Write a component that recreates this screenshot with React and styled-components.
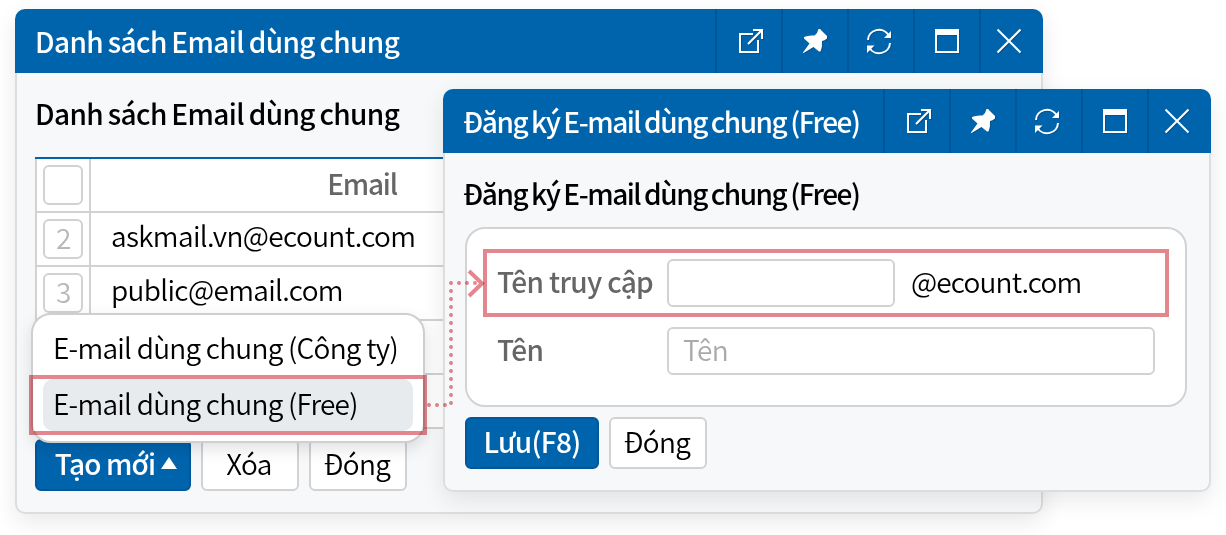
import React from 'react'
import styled, { createGlobalStyle } from 'styled-components'


const GlobalStyle = createGlobalStyle`
  * {
    box-sizing: border-box;
  }
  body {
    margin: 0;
    background: #fff;
    color: #000;
    font-family: 'Noto Sans CJK KR', 'Noto Sans', sans-serif;
    font-size: 28px;
    font-weight: 350;
    line-height: 40px;
    letter-spacing: -0.65px;
  }
`

const Desktop = styled.div`
  position: relative;
  width: 1226px;
  height: 535px;
  overflow: hidden;
`

const Window = styled.section`
  position: absolute;
  left: ${props => props.$x}px;
  top: ${props => props.$y}px;
  width: ${props => props.$w}px;
  height: ${props => props.$h}px;
  display: flex;
  flex-direction: column;
  border-radius: 10px;
  box-shadow: 0 8px 24px rgba(0, 0, 0, 0.09);
`

const WindowHeader = styled.header`
  display: flex;
  flex: none;
  height: 64px;
  background: #0064ad;
  color: #fff;
  border-radius: 10px 10px 0 0;
`

const WindowTitle = styled.h1`
  flex: 1;
  margin: 0;
  padding: 12px 0 0 20px;
  font-size: 28px;
  font-weight: 500;
  line-height: 40px;
  letter-spacing: ${props => props.$spacing}px;
  word-spacing: -1px;
  white-space: nowrap;
`

const ToolButton = styled.button`
  width: 66px;
  padding: 0 0 0 ${props => props.$left}px;
  border: 0;
  border-left: 2px solid #005797;
  background: none;
  color: #fff;
  display: flex;
  align-items: center;

  &:last-child {
    width: 64px;
  }

  svg {
    display: block;
    overflow: visible;
    filter: drop-shadow(1px 1px 0 rgba(0, 50, 90, 0.3));
  }
`

const WindowBody = styled.div`
  flex: 1;
  padding: 20px 18px 0 ${props => props.$left}px;
  border: 2px solid #dcddde;
  border-top: 0;
  border-radius: 0 0 10px 10px;
  background: #f7f8fa;
`

const Heading = styled.h2`
  margin: 0 0 0 ${props => props.$indent}px;
  font-size: 28px;
  font-weight: 500;
  line-height: 40px;
  letter-spacing: ${props => props.$spacing}px;
  word-spacing: -1px;
  white-space: nowrap;
`

const Grid = styled.div`
  margin-top: 24px;
  border-top: 2px solid #0064ad;
  background: #fff;
`

const GridRow = styled.div`
  display: grid;
  grid-template-columns: 54px 546px 1fr;
  height: 54px;
  border-bottom: 2px solid #d2d2d2;
  border-left: 2px solid #d2d2d2;
`

const CheckCell = styled.div`
  padding: 6px;
  border-right: 2px solid #d2d2d2;
`

const Check = styled.div`
  width: 40px;
  height: 40px;
  border: 2px solid #d2d2d2;
  border-radius: 6px;
  background: #fff;
  color: #b8b8b8;
  line-height: 32px;
  letter-spacing: -1.5px;
  text-align: center;
`

const HeadCell = styled.div`
  padding: 4px 4px 0 0;
  color: #666;
  font-weight: 500;
  letter-spacing: -1.2px;
  text-align: center;
`

const Cell = styled.div`
  padding: 2px 0 0 20px;
`

const Actions = styled.div`
  display: flex;
  gap: 10px;
  margin-top: 10px;
`

const Button = styled.button`
  display: flex;
  align-items: center;
  justify-content: center;
  gap: 6px;
  width: ${props => props.$w}px;
  height: 52px;
  padding: 0 ${props => (props.$primary ? 0 : 2)}px 4px ${props => props.$left || 0}px;
  border: 2px solid ${props => (props.$primary ? '#00579b' : '#d2d2d2')};
  border-radius: 6px;
  background: ${props => (props.$primary ? '#0064ad' : '#fff')};
  color: ${props => (props.$primary ? '#fff' : '#000')};
  font: inherit;
  font-weight: ${props => (props.$primary ? 500 : 350)};
  letter-spacing: ${props => props.$spacing || -0.65}px;
`

const Menu = styled.div`
  position: absolute;
  left: 31px;
  top: 313px;
  width: 394px;
  height: 130px;
  padding: 8px 10px;
  border: 2px solid #cfcfcf;
  border-radius: 20px;
  background: #fff;
  letter-spacing: -0.75px;
  box-shadow: 0 6px 16px rgba(0, 0, 0, 0.12);
`

const MenuItem = styled.div`
  height: 52px;
  margin-bottom: 4px;
  padding: 4px 0 0 10px;
  border-radius: 10px;
  background: ${props => (props.$active ? '#e8ebee' : 'transparent')};
  white-space: nowrap;
`

const Panel = styled.div`
  width: 722px;
  height: 180px;
  margin-top: 14px;
  padding: 30px;
  border: 2px solid #d2d3d5;
  border-radius: 20px;
  background: #fff;
`

const Field = styled.div`
  display: flex;
  height: 48px;
  margin-bottom: 20px;
  line-height: 44px;
`

const Label = styled.label`
  width: 170px;
  color: #666;
  font-weight: 500;
`

const Input = styled.input`
  width: ${props => props.$w}px;
  height: 48px;
  padding: 0 14px 4px;
  border: 2px solid #d2d2d2;
  border-radius: 6px;
  background: #fff;
  font: inherit;
  line-height: 40px;
  letter-spacing: inherit;

  &::placeholder {
    color: #aaa;
  }
`

const Suffix = styled.span`
  padding-left: 16px;
  letter-spacing: -0.85px;
`

const Highlight = styled.div`
  position: absolute;
  left: ${props => props.$x}px;
  top: ${props => props.$y}px;
  width: ${props => props.$w}px;
  height: ${props => props.$h}px;
  border: 4px solid #e4868e;
  mix-blend-mode: multiply;
`

const Connector = styled.svg`
  position: absolute;
  left: 427px;
  top: 265px;
  mix-blend-mode: multiply;
`

const OpenIcon = () => (
  <svg width="24" height="24" viewBox="0 0 24 24" fill="none" stroke="currentColor" strokeWidth="2">
    <path d="M14 5H1V23H19V11" />
    <path d="M9 15L22 2M14 1H23V10" />
  </svg>
)

const PinIcon = () => (
  <svg width="24" height="24" viewBox="0 0 24 24" fill="currentColor">
    <path d="M15.500 0H17L24 7V9.500Q21.500 11.500 19 12Q19.500 18 17.500 22.500H16L10.500 18L0.500 24H0V23.500L6.500 14.500L1 9.500V8Q5 6 11.500 6.500L14 4Z" />
  </svg>
)

const RefreshIcon = () => (
  <svg width="24" height="24" viewBox="0 0 24 24" fill="none" stroke="currentColor" strokeWidth="2">
    <path d="M1 11A11 10.500 0 0 1 21.500 6" />
    <path d="M23 14A11 10.500 0 0 1 2.500 19" />
    <path d="M24 2V9H17Z" fill="currentColor" stroke="none" />
    <path d="M0 24V16.500H7.500Z" fill="currentColor" stroke="none" />
  </svg>
)

const MaximizeIcon = () => (
  <svg width="24" height="24" viewBox="0 0 24 24">
    <path d="M1 1H23V23H1Z" fill="none" stroke="currentColor" strokeWidth="2" />
    <path d="M0 0H24V6H0Z" fill="currentColor" />
  </svg>
)

const CloseIcon = () => (
  <svg width="24" height="24" viewBox="0 0 24 24" fill="none" stroke="currentColor" strokeWidth="2">
    <path d="M0.500 0.500L23.500 23.500M23.500 0.500L0.500 23.500" />
  </svg>
)

const tools = [
  { name: 'open', left: 22, Icon: OpenIcon },
  { name: 'pin', left: 20, Icon: PinIcon },
  { name: 'refresh', left: 18, Icon: RefreshIcon },
  { name: 'maximize', left: 20, Icon: MaximizeIcon },
  { name: 'close', left: 16, Icon: CloseIcon },
]

const renderTools = () => {
  return tools.map(({ name, left, Icon }) => (
    <ToolButton key={name} $left={left} aria-label={name}>
      <Icon />
    </ToolButton>
  ))
}

// the last two rows have no mail yet and stay empty
const rows = [
  { no: 2, email: 'askmail.vn@ecount.com' },
  { no: 3, email: 'public@email.com' },
  { no: '', email: '' },
  { no: '', email: '' },
]

const SharedMailList = () => (
  <Window $x={15} $y={9} $w={1028} $h={505}>
    <WindowHeader>
      <WindowTitle $spacing={-0.62}>Danh sách Email dùng chung</WindowTitle>
      {renderTools()}
    </WindowHeader>
    <WindowBody $left={18}>
      <Heading $indent={0} $spacing={-0.62}>Danh sách Email dùng chung</Heading>
      <Grid>
        <GridRow>
          <CheckCell><Check /></CheckCell>
          <HeadCell>Email</HeadCell>
        </GridRow>
        {rows.map((row, i) => (
          <GridRow key={i}>
            <CheckCell><Check>{row.no}</Check></CheckCell>
            <Cell>{row.email}</Cell>
          </GridRow>
        ))}
      </Grid>
      <Actions>
        <Button $primary $w={156} $left={6} $spacing={-0.85}>
          Tạo mới
          <svg width="16" height="12" viewBox="0 0 16 12">
            <path d="M8 0L16 12H0Z" fill="#fff" />
          </svg>
        </Button>
        <Button $w={98}>Xóa</Button>
        <Button $w={98}>Đóng</Button>
      </Actions>
    </WindowBody>
  </Window>
)

const RegisterMail = () => (
  <Window $x={443} $y={89} $w={768} $h={403}>
    <WindowHeader>
      <WindowTitle $spacing={-1.46}>Đăng ký E-mail dùng chung (Free)</WindowTitle>
      {renderTools()}
    </WindowHeader>
    <WindowBody $left={20}>
      <Heading $indent={-2} $spacing={-1.46}>Đăng ký E-mail dùng chung (Free)</Heading>
      <Panel>
        <Field>
          <Label>Tên truy cập</Label>
          <Input $w={228} />
          <Suffix>@ecount.com</Suffix>
        </Field>
        <Field>
          <Label>Tên</Label>
          <Input $w={488} placeholder="Tên" />
        </Field>
      </Panel>
      <Actions>
        <Button $primary $w={134}>Lưu(F8)</Button>
        <Button $w={98}>Đóng</Button>
      </Actions>
    </WindowBody>
  </Window>
)

const App = () => {
  return (
    <React.Fragment>
      <GlobalStyle />
      <Desktop>
        <SharedMailList />
        <Menu>
          <MenuItem>E-mail dùng chung (Công ty)</MenuItem>
          <MenuItem $active>E-mail dùng chung (Free)</MenuItem>
        </Menu>
        <RegisterMail />
        <Highlight $x={29} $y={375} $w={398} $h={60} />
        <Highlight $x={483} $y={249} $w={686} $h={68} />
        <Connector width="62" height="146" fill="none" stroke="#e4868e" strokeWidth="4">
          <path d="M2 140H19" strokeLinecap="round" strokeDasharray="0 8" />
          <path d="M24 138V17.500" strokeLinecap="round" strokeDasharray="0 8" />
          <path d="M32 18H50" strokeLinecap="round" strokeDasharray="0 8" />
          <path d="M42 6L55 18.500L42 31" />
        </Connector>
      </Desktop>
    </React.Fragment>
  )
}

export default App
